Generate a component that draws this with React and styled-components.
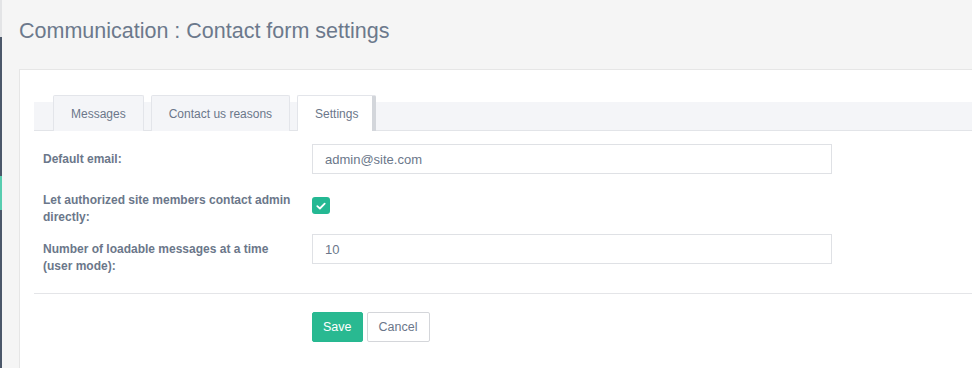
import React from 'react';
import styled, { createGlobalStyle } from 'styled-components';

const GlobalStyle = createGlobalStyle`
  html, body {
    margin: 0;
    padding: 0;
    background: #f5f5f5;
    overflow: hidden;
  }
  body {
    font-family: "Liberation Sans", Arial, sans-serif;
    color: #6b778a;
  }
`;

const Layout = styled.div`
  display: flex;
  height: 368px;
  overflow: hidden;
`;

const SideEdge = styled.div`
  width: 2px;
  flex: none;
  display: flex;
  flex-direction: column;
  background: #4c586a;
`;

const SideTop = styled.div`
  height: 37px;
  background: #e3e4e6;
`;

const SideAccent = styled.div`
  height: 34px;
  margin-top: 139px;
  background: #58cdb0;
`;

const Main = styled.main`
  flex: 1;
  padding-left: 17px;
  margin-right: -12px;
  min-width: 0;
`;

const Title = styled.h1`
  margin: 0;
  height: 69px;
  display: flex;
  align-items: center;
  padding-bottom: 6px;
  box-sizing: border-box;
  font-size: 21.5px;
  font-weight: normal;
  color: #6c798c;
`;

const Card = styled.section`
  background: #fff;
  border: 1px solid #e6e6e6;
  padding: 32px 0 0 14px;
  height: 100%;
`;

const TabStrip = styled.div`
  display: flex;
  gap: 7px;
  padding-left: 19px;
  height: 28px;
  background: #f4f5f8;
  border-bottom: 1px solid #e2e4e8;
  align-items: flex-end;
`;

const Tab = styled.div`
  height: 36px;
  margin-bottom: -1px;
  box-sizing: border-box;
  display: flex;
  align-items: center;
  padding: 0 ${({ $active }) => ($active ? '14px' : '17px')} 0 17px;
  font-size: 12px;
  color: #6b778a;
  border: 1px solid #e3e5ea;
  border-bottom: none;
  border-radius: 2px 2px 0 0;
  background: ${({ $active }) => ($active ? '#fff' : '#f4f5f8')};
  border-right: ${({ $active }) => ($active ? '4px solid #d3d6db' : '1px solid #e3e5ea')};
`;

const Form = styled.div`
  padding-top: 13px;
`;

const Row = styled.div`
  display: grid;
  grid-template-columns: 278px 520px;
  align-items: start;
  margin-bottom: ${({ $gap }) => $gap}px;
`;

const Label = styled.label`
  padding: 7px 12px 0 9px;
  font-size: 12px;
  font-weight: bold;
  line-height: 17px;
  color: #6b778a;
`;

const Input = styled.input`
  height: 30px;
  box-sizing: border-box;
  border: 1px solid #dfe1e5;
  padding: 0 12px;
  font-family: "Liberation Sans", Arial, sans-serif;
  font-size: 13px;
  color: #6b778a;
  outline: none;
`;

const CheckWrap = styled.div`
  padding-top: 12px;
`;

const CheckBox = styled.span`
  display: flex;
  width: 18px;
  height: 17px;
  border-radius: 3px;
  background: #24b893;
  align-items: center;
  justify-content: center;
`;

const Divider = styled.hr`
  margin: 18px 0 18px;
  border: none;
  border-top: 1px solid #e4e5e8;
`;

const Actions = styled.div`
  display: flex;
  gap: 4px;
  padding-left: 278px;
`;

const Button = styled.button`
  height: 30px;
  box-sizing: border-box;
  padding: 0 10px;
  border-radius: 2px;
  font-family: "Liberation Sans", Arial, sans-serif;
  font-size: 12.5px;
  border: 1px solid ${({ $primary }) => ($primary ? '#27b891' : '#d4d6da')};
  background: ${({ $primary }) => ($primary ? '#29b991' : '#fff')};
  color: ${({ $primary }) => ($primary ? '#fff' : '#6b778a')};
  min-width: ${({ $primary }) => ($primary ? '50px' : '63px')};
`;

const CheckIcon = () => (
  <svg width="10" height="8" viewBox="0 0 10 8">
    <path d="M1.3 4.2 L3.9 6.5 L8.7 1.6" fill="none" stroke="#fff" strokeWidth="1.8" strokeLinecap="round" strokeLinejoin="round" />
  </svg>
);

export default function App() {
  return (
    <Layout>
      <GlobalStyle />
      <SideEdge>
        <SideTop />
        <SideAccent />
      </SideEdge>
      <Main>
        <Title>Communication : Contact form settings</Title>
        <Card>
          <TabStrip>
            <Tab>Messages</Tab>
            <Tab>Contact us reasons</Tab>
            <Tab $active>Settings</Tab>
          </TabStrip>
          <Form>
            <Row $gap={11}>
              <Label>Default email:</Label>
              <Input defaultValue="admin@site.com" />
            </Row>
            <Row $gap={8}>
              <Label>Let authorized site members contact admin directly:</Label>
              <CheckWrap>
                <CheckBox>
                  <CheckIcon />
                </CheckBox>
              </CheckWrap>
            </Row>
            <Row $gap={0}>
              <Label>Number of loadable messages at a time (user mode):</Label>
              <Input defaultValue="10" />
            </Row>
          </Form>
          <Divider />
          <Actions>
            <Button $primary>Save</Button>
            <Button>Cancel</Button>
          </Actions>
        </Card>
      </Main>
    </Layout>
  );
}
